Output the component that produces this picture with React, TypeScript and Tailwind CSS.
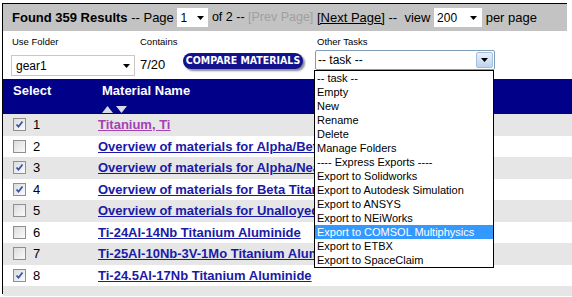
import type { FC } from 'react';

const ROWS = [
  { n: 1, name: 'Titanium, Ti', checked: true, visited: true },
  { n: 2, name: 'Overview of materials for Alpha/Beta Titanium Alloy', checked: false },
  { n: 3, name: 'Overview of materials for Alpha/Near Alpha Titanium Alloy', checked: true },
  { n: 4, name: 'Overview of materials for Beta Titanium Alloy', checked: true },
  { n: 5, name: 'Overview of materials for Unalloyed / Modified Titanium', checked: false },
  { n: 6, name: 'Ti-24Al-14Nb Titanium Aluminide', checked: false },
  { n: 7, name: 'Ti-25Al-10Nb-3V-1Mo Titanium Aluminide', checked: false },
  { n: 8, name: 'Ti-24.5Al-17Nb Titanium Aluminide', checked: true },
];

const TASKS = [
  '-- task --',
  'Empty',
  'New',
  'Rename',
  'Delete',
  'Manage Folders',
  '---- Express Exports ----',
  'Export to Solidworks',
  'Export to Autodesk Simulation',
  'Export to ANSYS',
  'Export to NEiWorks',
  'Export to COMSOL Multiphysics',
  'Export to ETBX',
  'Export to SpaceClaim',
];

const Arrow: FC = () => (
  <svg width="7" height="4" viewBox="0 0 7 4">
    <path d="M0 0h7L3.5 4z" fill="#000" />
  </svg>
);

const Check: FC<{ checked: boolean }> = ({ checked }) => (
  <span className="w-[13px] h-[13px] border border-[#8f8f8f] bg-gradient-to-br from-[#dcdcdc] to-[#fbfbfb] flex items-center justify-center flex-shrink-0">
    {checked && (
      <svg width="9" height="9" viewBox="0 0 9 9">
        <path d="M1.5 4.5l2 2.2L7.5 1.5" fill="none" stroke="#3454a8" strokeWidth="1.8" />
      </svg>
    )}
  </span>
);

export default function App() {
  return (
    <div className="w-[572px] h-[297px] bg-white overflow-hidden relative font-['Liberation_Sans',Arial,sans-serif] text-black">
      {/* frame */}
      <div className="ml-[2px] mt-[3px] h-px w-[565px] bg-black" />
      <div className="ml-[2px] border-l border-black h-[290px] w-[570px]">
        {/* results bar */}
        <div className="h-[27px] w-[564px] bg-[#c3c3c3] flex items-center pl-[9px] text-[13px] whitespace-pre">
          <span className="font-bold">Found 359 Results</span>
          <span> -- Page </span>
          <span className="bg-white w-[31px] h-[19px] flex items-center justify-between pl-[3px] pr-[4px]">
            <span className="text-[12px]">1</span>
            <Arrow />
          </span>
          <span className="text-[12.5px]"> of 2 -- </span>
          <span className="text-[#a0a0a0] text-[12.5px]">[Prev Page]</span>
          <span> </span>
          <span className="underline">[Next Page]</span>
          <span> --  view </span>
          <span className="bg-white w-[48px] h-[19px] flex items-center justify-between pl-[3px] pr-[5px]">
            <span className="text-[12px]">200</span>
            <Arrow />
          </span>
          <span> per page</span>
        </div>

        {/* controls */}
        <div className="h-[48px] flex pl-[8px] pt-[5px]">
          <div className="w-[129px]">
            <div className="text-[9.5px] leading-[12px] pl-[1px]">Use Folder</div>
            <div className="mt-[7px] w-[124px] h-[21px] border border-[#c8c8c8] flex items-center justify-between pl-[4px] pr-[4px]">
              <span className="text-[12px]">gear1</span>
              <Arrow />
            </div>
          </div>
          <div className="w-[43px]">
            <div className="text-[9.5px] leading-[12px]">Contains</div>
            <div className="mt-[6px] text-[13px] leading-[22px]">7/20</div>
          </div>
          <div className="pt-[17px] w-[132px]">
            <div className="w-[120px] h-[16px] rounded-full bg-[#12128e] shadow-[2px_2px_2px_#8a8a9a] flex items-center justify-center text-white text-[10.5px] font-bold font-['DejaVu_Sans_Condensed','Liberation_Sans_Narrow',sans-serif]">
              COMPARE MATERIALS
            </div>
          </div>
          <div className="w-[180px]">
            <div className="text-[9.5px] leading-[12px] pl-[2px]">Other Tasks</div>
            <div className="mt-[2px] w-[180px] h-[20px] border border-[#7f9db9] rounded-[2px] flex items-center justify-between pl-[2px] pr-[1px]">
              <span className="text-[12px]">-- task --</span>
              <span className="w-[17px] h-[16px] border border-[#a6bfd9] rounded-[2px] bg-gradient-to-b from-[#e9f1fb] to-[#bcd3ee] flex items-center justify-center">
                <Arrow />
              </span>
            </div>
          </div>
        </div>

        {/* table */}
        <div className="h-[35px] bg-[#000088] text-white font-bold text-[13px] flex pl-[10px] pt-[2px]">
          <div className="w-[89px]">Select</div>
          <div>
            <div>Material Name</div>
            <div className="flex gap-[3px] mt-[5px]">
              <svg width="11" height="7" viewBox="0 0 11 7"><path d="M0 7h11L5.5 0z" fill="#d8d8e8" /></svg>
              <svg width="11" height="7" viewBox="0 0 11 7"><path d="M0 0h11L5.5 7z" fill="#d8d8e8" /></svg>
            </div>
          </div>
        </div>
        {ROWS.map((r, i) => (
          <div key={r.n} className={`h-[21.5px] flex items-center pl-[10px] text-[13px] ${i % 2 === 0 ? 'bg-[#e6e6e6]' : 'bg-white'}`}>
            <Check checked={r.checked} />
            <span className="ml-[7px] w-[65px]">{r.n}</span>
            <span className={`font-bold underline whitespace-nowrap ${r.visited ? 'text-[#a442b4]' : 'text-[#1a1aa8]'}`}>{r.name}</span>
          </div>
        ))}
        <div className="h-[10px] bg-[#e6e6e6]" />
      </div>

      {/* open task list */}
      <div className="absolute left-[314px] top-[70px] w-[180px] border border-black bg-white text-[11px] leading-[14px]">
        {TASKS.map(t => (
          <div key={t} className={`px-[2px] whitespace-nowrap ${t === 'Export to COMSOL Multiphysics' ? 'bg-[#3399ff] text-white' : ''}`}>{t}</div>
        ))}
      </div>
    </div>
  );
}
